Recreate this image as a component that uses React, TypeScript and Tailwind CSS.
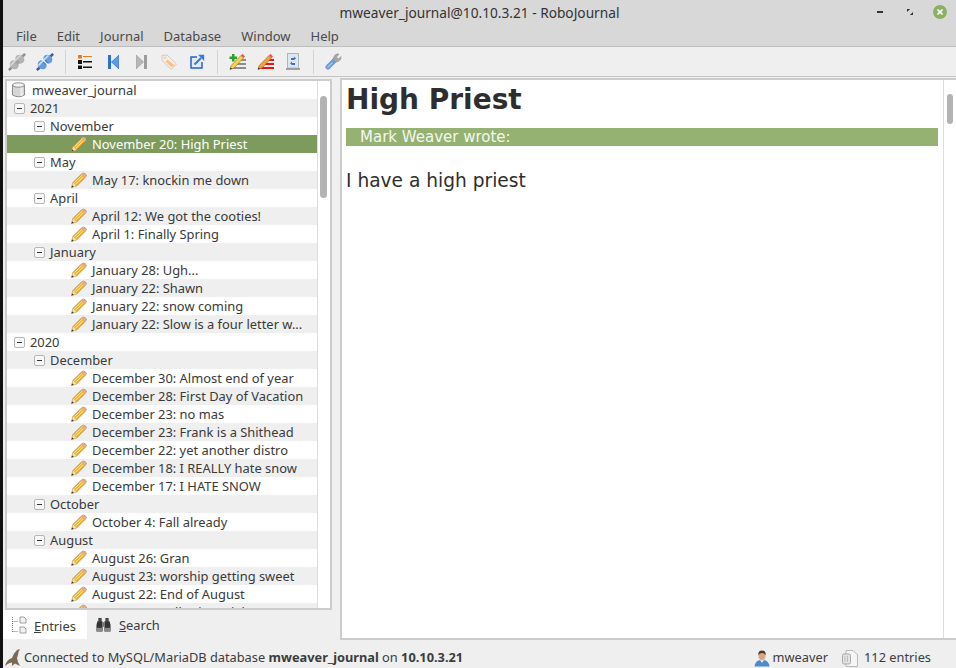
import React from 'react';

type Row = { label: string; level: 0 | 1 | 2 };

const rows: Row[] = [
  { label: '2021', level: 0 },
  { label: 'November', level: 1 },
  { label: 'November 20: High Priest', level: 2 },
  { label: 'May', level: 1 },
  { label: 'May 17: knockin me down', level: 2 },
  { label: 'April', level: 1 },
  { label: 'April 12: We got the cooties!', level: 2 },
  { label: 'April 1: Finally Spring', level: 2 },
  { label: 'January', level: 1 },
  { label: 'January 28: Ugh...', level: 2 },
  { label: 'January 22: Shawn', level: 2 },
  { label: 'January 22: snow coming', level: 2 },
  { label: 'January 22: Slow is a four letter w...', level: 2 },
  { label: '2020', level: 0 },
  { label: 'December', level: 1 },
  { label: 'December 30: Almost end of year', level: 2 },
  { label: 'December 28: First Day of Vacation', level: 2 },
  { label: 'December 23: no mas', level: 2 },
  { label: 'December 23: Frank is a Shithead', level: 2 },
  { label: 'December 22: yet another distro', level: 2 },
  { label: 'December 18: I REALLY hate snow', level: 2 },
  { label: 'December 17: I HATE SNOW', level: 2 },
  { label: 'October', level: 1 },
  { label: 'October 4: Fall already', level: 2 },
  { label: 'August', level: 1 },
  { label: 'August 26: Gran', level: 2 },
  { label: 'August 23: worship getting sweet', level: 2 },
  { label: 'August 22: End of August', level: 2 },
  { label: 'August 20: Kelly Financial', level: 2 },
];

function Pencil() {
  return (
    <svg width="16" height="16" viewBox="0 0 16 16" className="shrink-0">
      <path d="M0.5 15.5 L2 10.5 L11 1.5 Q13 0.5 14.5 2 Q16 3.5 14.5 5 L5.5 14 Z" fill="#f2b632" stroke="#a9803a" strokeWidth="0.8" />
      <path d="M3.5 10.5 L11.5 2.8 M5 12 L13 4.2" stroke="#fde596" strokeWidth="1" />
      <path d="M11 1.5 Q13 0.5 14.5 2 Q16 3.5 14.5 5 L13.5 6 L10 2.5 Z" fill="#e9ab80" />
      <path d="M0.5 15.5 L2 10.5 L5.5 14 Z" fill="#f3e0bf" />
      <path d="M0.5 15.5 L1.2 13.2 L2.8 14.8 Z" fill="#4a3a20" />
    </svg>
  );
}

function Minus() {
  return (
    <span className="flex h-[11px] w-[11px] shrink-0 items-center justify-center rounded-[2px] border border-[#b5b5b5] bg-[#f8f8f8]">
      <span className="h-px w-[5px] bg-[#333333]" />
    </span>
  );
}

function Database() {
  return (
    <svg width="13" height="16" viewBox="0 0 13 16" className="shrink-0">
      <path d="M0.5 3 V13 Q6.5 16.5 12.5 13 V3 Z" fill="#d6d6d6" stroke="#8c8c8c" />
      <ellipse cx="6.5" cy="3" rx="6" ry="2.2" fill="#f4f4f4" stroke="#8c8c8c" />
      <path d="M9.5 5.5 V14" stroke="#eeeeee" strokeWidth="2" />
    </svg>
  );
}

function Plug({ on }: { on: boolean }) {
  const a = on ? '#6a9ade' : '#b4b4b4';
  const b = on ? '#2f62ad' : '#8f8f8f';
  const hi = on ? '#cfe0f6' : '#d8d8d8';
  return (
    <svg width="18" height="18" viewBox="0 0 18 18">
      <g transform="rotate(-45 9 9)">
        <rect x="-2.5" y="7.7" width="4" height="2.6" fill={b} />
        <rect x="16.5" y="7.7" width="4" height="2.6" fill={b} />
        <ellipse cx="5" cy="9" rx="4.2" ry="4.8" fill={a} />
        <ellipse cx="13" cy="9" rx="4.2" ry="4.8" fill={a} />
        <rect x="7" y="6.5" width="4" height="5" fill={on ? '#4f82cf' : '#a4a4a4'} />
        <rect x="2" y="6" width="14" height="1.6" fill={hi} />
        {on && <rect x="8.5" y="5" width="1" height="8" fill="#ffffff" />}
      </g>
    </svg>
  );
}

function ListIcon() {
  return (
    <svg width="14" height="14" viewBox="0 0 14 14">
      <rect x="0" y="0" width="4" height="3.5" fill="#f07818" />
      <rect x="0" y="5" width="4" height="4" fill="#111111" />
      <rect x="0" y="10.5" width="4" height="3.5" fill="#111111" />
      <rect x="5" y="1" width="9" height="1" fill="#f07818" />
      <rect x="5" y="6" width="9" height="1.5" fill="#111111" />
      <rect x="5" y="11.5" width="9" height="1.5" fill="#111111" />
    </svg>
  );
}

function SkipIcon({ dir, color, dark }: { dir: 'left' | 'right'; color: string; dark: string }) {
  return (
    <svg width="11" height="14" viewBox="0 0 11 14">
      {dir === 'left' ? (
        <>
          <rect x="0" y="0" width="3" height="14" fill={color} />
          <path d="M11 0 V14 L3.5 7 Z" fill={dark} stroke={color} strokeWidth="0.7" />
        </>
      ) : (
        <>
          <rect x="8" y="0" width="3" height="14" fill={color} />
          <path d="M0 0 V14 L7.5 7 Z" fill={dark} stroke={color} strokeWidth="0.7" />
        </>
      )}
    </svg>
  );
}

function TagIcon() {
  return (
    <svg width="16" height="16" viewBox="0 0 16 16">
      <path d="M1 1.5 L6 1 L15.5 10 L10 15.5 L1 6 Z" fill="#fbeee0" stroke="#d2cac0" />
      <path d="M6.5 5.5 L13.5 11 L10.5 13.5 L4.5 7.5 Z" fill="#f6c292" />
      <circle cx="3.8" cy="3.8" r="1" fill="#ffffff" stroke="#b5a99a" strokeWidth="0.5" />
    </svg>
  );
}

function ShareIcon() {
  return (
    <svg width="15" height="15" viewBox="0 0 15 15" fill="none">
      <path d="M7 3 H1 V14 H12 V8" fill="#e3ecfb" stroke="#2c5fc9" strokeWidth="1.5" />
      <path d="M4.5 10.5 L11 4" stroke="#3d78dc" strokeWidth="2.2" />
      <path d="M8 0.8 H14.2 V7 Z" fill="#3d78dc" />
    </svg>
  );
}

function EditLines({ add }: { add: boolean }) {
  const line = add ? '#8c8c8c' : '#ee1111';
  return (
    <svg width="17" height="17" viewBox="0 0 17 17">
      <rect x="9" y="6" width="8" height="2" fill={line} />
      <rect x="7" y="10" width="10" height="2" fill={line} />
      <rect x="3" y="14" width="14" height="2" fill={line} />
      <path d="M1 16.5 L2.2 12.5 L12 2.5 L14.5 5 L5 15 Z" fill={add ? '#f6d24e' : '#f2a23a'} stroke="#8f6b28" strokeWidth="0.6" />
      <path d="M12 2.5 L13.5 0.8 L16 3.4 L14.5 5 Z" fill="#e8584e" />
      <path d="M1 16.5 L1.7 14.5 L3 15.8 Z" fill="#222222" />
      {add && <path d="M3 1 H5.5 V3.5 H8 V6 H5.5 V8.5 H3 V6 H0.5 V3.5 H3 Z" fill="#2ca02c" />}
    </svg>
  );
}

function DeviceIcon() {
  return (
    <svg width="14" height="17" viewBox="0 0 14 17">
      <rect x="1.5" y="0.5" width="11" height="14.5" fill="#dde7f4" stroke="#b0b3b8" />
      <rect x="0" y="15" width="14" height="2" fill="#a0a0a0" />
      <path d="M5 5 H8 V3.5 L10 5.5 L8 7 H5 Z M9 10 H6 V8.5 L4 10.5 L6 12 H9 Z" fill="#3f70c0" />
    </svg>
  );
}

function WrenchIcon() {
  return (
    <svg width="17" height="17" viewBox="0 0 17 17" fill="none">
      <path d="M3 14 L10 7" stroke="#6f9bd8" strokeWidth="5" strokeLinecap="round" />
      <path d="M3 14 L7 10" stroke="#a8c4ea" strokeWidth="1.2" strokeLinecap="round" />
      <path d="M8.5 7 Q8 2 12.5 0.8 L14 1.2 L11.5 4 L13.5 6 L16 3.5 Q17 7.5 11 9.2 Z" fill="#a6a6a6" stroke="#8f8f8f" strokeWidth="0.5" />
    </svg>
  );
}

function EntriesIcon() {
  return (
    <svg width="15" height="18" viewBox="0 0 15 18" fill="none" className="shrink-0">
      <path d="M0.5 1 V16 M0.5 5.5 H6 M0.5 15.5 H6" stroke="#777777" strokeDasharray="1 1" />
      <path d="M8 1 H12 L14 3 V7 H8 Z M8 11 H12 L14 13 V17 H8 Z" fill="#f2f2f2" stroke="#8a8a8a" strokeWidth="0.8" />
    </svg>
  );
}

function BinocularsIcon() {
  return (
    <svg width="15" height="16" viewBox="0 0 16 16" className="shrink-0">
      <rect x="2.5" y="0.5" width="3.5" height="4" fill="#444444" />
      <rect x="10" y="0.5" width="3.5" height="4" fill="#444444" />
      <path d="M1.5 4 H7 V15 H0.5 V8 Z M9 4 H14.5 L15.5 8 V15 H9 Z" fill="#333333" />
      <rect x="7" y="5" width="2" height="5" fill="#777777" />
      <rect x="1" y="11" width="5.5" height="3.5" fill="#8a8a8a" />
      <rect x="9.5" y="11" width="5.5" height="3.5" fill="#8a8a8a" />
    </svg>
  );
}

function DolphinIcon() {
  return (
    <svg width="16" height="18" viewBox="0 0 16 18" className="shrink-0">
      <path d="M0 17 Q2 10 7 9 Q8 5 12 1 L15 0 Q13 3 13 6 L12 9 Q12.5 13 15 17 L10 14.5 L7 17 L7 13.5 Q4 13.5 0 17 Z" fill="#7a6a55" />
    </svg>
  );
}

function UserIcon() {
  return (
    <svg width="16" height="17" viewBox="0 0 16 17" className="shrink-0">
      <path d="M0.5 16.5 Q1 11 6 10 H10 Q15 11 15.5 16.5 Z" fill="#4d8ac7" />
      <path d="M6 10 L8 13 L10 10 Z" fill="#e8e8e8" />
      <ellipse cx="8" cy="5.5" rx="3.5" ry="4.5" fill="#d8a585" />
      <path d="M4.3 5 Q4 0.5 8 0.5 Q12 0.5 11.7 5 Q10 3 8 3 Q6 3 4.3 5 Z" fill="#4a3a2c" />
    </svg>
  );
}

function PagesIcon() {
  return (
    <svg width="16" height="17" viewBox="0 0 16 17" className="shrink-0">
      <path d="M4 0.5 H11 L15.5 5 V16.5 H4 Z" fill="#f6f6f6" stroke="#b8b8b8" />
      <rect x="0.5" y="4" width="8" height="10" rx="1.5" fill="#e4e4e4" stroke="#a8a8a8" />
      <path d="M3 6 V12 M5.5 6 V12" stroke="#bbbbbb" />
    </svg>
  );
}

function ToolbarDivider() {
  return <span className="ml-[6px] mr-[5px] h-6 w-px shrink-0 bg-[#d4d4d4]" />;
}

function ToolButton({ children }: { children: React.ReactNode }) {
  return <span className="flex h-[30px] w-7 shrink-0 items-center justify-center">{children}</span>;
}

export default function App() {
  return (
    <div className="flex h-[668px] w-[956px] overflow-hidden bg-[#111111] font-['Noto_Sans',sans-serif] text-[12.9px] text-[#3c3c3c]">
      <div className="ml-[3px] flex min-w-0 flex-1 flex-col bg-[#efefef]">
        {/* Title and menu */}
        <div className="relative h-[47px] shrink-0 border-b border-[#bdbdbd] bg-[#d8d8d8]">
          <div className="h-[23px] pt-[4px] text-center text-[13.7px] leading-[18px] text-[#333333]">
            mweaver_journal@10.10.3.21 - RoboJournal
          </div>
          <div className="flex h-[23px] items-center gap-[20px] pl-[13px] pt-[3px] text-[13px] leading-none text-[#4a4a4a]">
            <span>File</span>
            <span>Edit</span>
            <span>Journal</span>
            <span>Database</span>
            <span>Window</span>
            <span>Help</span>
          </div>
          <div className="absolute right-[9px] top-[5px] flex items-center">
            <span className="mr-[24px] h-[2px] w-[6px] bg-[#333333]" />
            <svg width="6" height="6" viewBox="0 0 6 6" className="mr-[20px]">
              <path d="M0 2.5 L2.5 0 H0 Z M6 3.5 L3.5 6 H6 Z" fill="#333333" stroke="#333333" />
            </svg>
            <span className="flex h-[14px] w-[14px] items-center justify-center rounded-full bg-[#8ab163]">
              <svg width="6" height="6" viewBox="0 0 6 6">
                <path d="M0.5 0.5 L5.5 5.5 M5.5 0.5 L0.5 5.5" stroke="#ffffff" strokeWidth="1.6" />
              </svg>
            </span>
          </div>
        </div>

        {/* Toolbar */}
        <div className="flex h-[30px] shrink-0 items-center border-b border-[#c4c4c4]">
          <ToolButton><Plug on={false} /></ToolButton>
          <ToolButton><Plug on /></ToolButton>
          <ToolbarDivider />
          <ToolButton><ListIcon /></ToolButton>
          <ToolButton><SkipIcon dir="left" color="#2a70cc" dark="#5b9be0" /></ToolButton>
          <ToolButton><SkipIcon dir="right" color="#9c9c9c" dark="#b8b8b8" /></ToolButton>
          <ToolButton><TagIcon /></ToolButton>
          <ToolButton><ShareIcon /></ToolButton>
          <ToolbarDivider />
          <ToolButton><EditLines add /></ToolButton>
          <ToolButton><EditLines add={false} /></ToolButton>
          <ToolButton><DeviceIcon /></ToolButton>
          <ToolbarDivider />
          <ToolButton><WrenchIcon /></ToolButton>
        </div>

        {/* Main panels */}
        <div className="flex h-[563px] shrink-0">
          <div className="flex w-[337px] shrink-0 flex-col">
            <div className="ml-[2px] mt-[2px] flex h-[531px] w-[327px] shrink-0 overflow-hidden border-2 border-[#cccccc] bg-white">
              <div className="min-w-0 flex-1 overflow-hidden">
                <div className="flex h-[18px] items-center gap-[7px] pl-[5px] text-[#3a3a3a]">
                  <Database />
                  <span className="pt-[2px]">mweaver_journal</span>
                </div>
                {rows.map((row, i) => {
                  const selected = i === 2;
                  return (
                    <div
                      key={row.label + i}
                      className={`flex h-[18px] items-center whitespace-nowrap ${selected ? 'bg-[#7d9b5c] text-white' : i % 2 === 0 ? 'bg-[#efefef] text-[#3a3a3a]' : 'bg-white text-[#3a3a3a]'}`}
                    >
                      {row.level === 0 && <span className="ml-[7px] mr-[5px]"><Minus /></span>}
                      {row.level === 1 && <span className="ml-[27px] mr-[5px]"><Minus /></span>}
                      {row.level === 2 && <span className="ml-[64px] mr-[5px]"><Pencil /></span>}
                      <span className="pt-[2px]">{row.label}</span>
                    </div>
                  );
                })}
              </div>
              <div className="w-[13px] shrink-0 border-l border-[#dddddd] bg-white pl-[2px] pt-[15px]">
                <div className="h-[102px] w-[7px] rounded-full bg-[#b3b3b3]" />
              </div>
            </div>
            <div className="flex h-[30px] shrink-0 items-start">
              <div className="flex h-[29px] w-[84px] items-center gap-[7px] bg-white pl-[9px]">
                <EntriesIcon />
                <span className="pt-[4px]"><span className="underline">E</span>ntries</span>
              </div>
              <div className="flex h-[29px] items-center gap-[8px] pl-[9px]">
                <BinocularsIcon />
                <span className="pt-[2px]"><span className="underline">S</span>earch</span>
              </div>
            </div>
          </div>

          {/* Entry view */}
          <div className="mt-px flex h-[562px] min-w-0 flex-1 border-2 border-r-0 border-[#cccccc] bg-white font-['DejaVu_Sans',sans-serif] text-[#2e2e2e]">
            <div className="min-w-0 flex-1 pl-[4px] pr-[5px] pt-[2px]">
              <h1 className="text-[28px] font-bold leading-[35px]">High Priest</h1>
              <div className="mt-[11px] h-[18px] bg-[#95b272] pl-[14px] text-[15px] leading-[18px] text-[#f4f7ee]">
                Mark Weaver wrote:
              </div>
              <p className="mt-[24px] text-[18.6px] leading-[22px]">I have a high priest</p>
            </div>
            <div className="w-[13px] shrink-0 border-l border-[#dddddd] pl-[3px] pt-[14px]">
              <div className="h-[30px] w-[6px] rounded-full bg-[#b3b3b3]" />
            </div>
          </div>
        </div>

        {/* Status bar */}
        <div className="flex h-[28px] shrink-0 items-center pl-[2px] pr-[25px] pt-[8px] text-[12.8px]">
          <DolphinIcon />
          <span className="ml-[3px]">
            Connected to MySQL/MariaDB database <b>mweaver_journal</b> on <b>10.10.3.21</b>
          </span>
          <span className="ml-auto flex items-center gap-[3px]">
            <UserIcon />
            <span>mweaver</span>
          </span>
          <span className="ml-[14px] flex items-center gap-[6px]">
            <PagesIcon />
            <span>112 entries</span>
          </span>
        </div>
      </div>
    </div>
  );
}
